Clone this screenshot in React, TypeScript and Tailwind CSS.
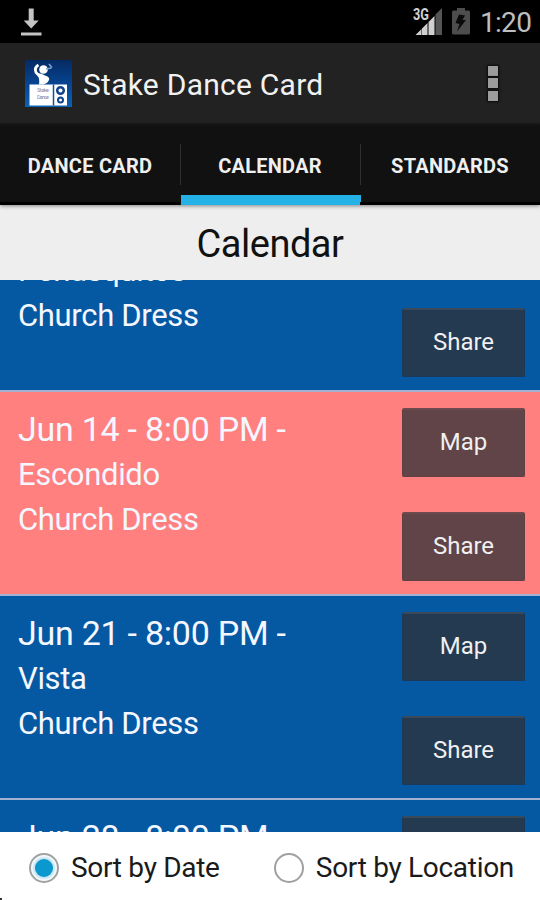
import React from "react";

type Entry = {
  id: string;
  date?: string;
  place?: string;
  dress?: string;
  actions: (string | null)[];
  tone: "blue" | "pink";
};

const entries: Entry[] = [
  { id: "jun-7", place: "Penasquitos", dress: "Church Dress", actions: [null, "Share"], tone: "blue" },
  { id: "jun-14", date: "Jun 14 - 8:00 PM -", place: "Escondido", dress: "Church Dress", actions: ["Map", "Share"], tone: "pink" },
  { id: "jun-21", date: "Jun 21 - 8:00 PM -", place: "Vista", dress: "Church Dress", actions: ["Map", "Share"], tone: "blue" },
  { id: "jun-28", date: "Jun 28 - 8:00 PM -", actions: [""], tone: "blue" },
];

function StatusBar() {
  return (
    <div className="flex h-[43px] shrink-0 items-start bg-black">
      <svg className="ml-[21px] mt-[8px]" width="21" height="28" viewBox="0 0 21 28" fill="#c4c4c4">
        <path d="M7.7 0.5h5v12h5L10.2 20.5 2.7 12.5h5z" />
        <rect x="0" y="24.5" width="20.5" height="3" />
      </svg>
      <svg className="ml-auto mt-[7px]" width="30" height="28" viewBox="0 0 30 28">
        <path d="M22.5 7.5 29 1V28H22.500z" fill="#555" />
        <path d="M2.500 28 8.500 22V28zM9 21.500 14.500 16V28H9zM15.500 15 21.500 9V28H15.500z" fill="#d0d0d0" />
        <text x="0" y="12.500" fontSize="16" fontWeight="700" fill="#d0d0d0" stroke="#000" strokeWidth="2" paintOrder="stroke" textLength="16" lengthAdjust="spacingAndGlyphs">3G</text>
      </svg>
      <svg className="ml-[9px] mt-[8px]" width="18" height="27" viewBox="0 0 18 27">
        <path d="M5 0h8v2.500h3.500Q18 2.500 18 4v21q0 1.500-1.500 1.500h-15Q0 26.500 0 25V4q0-1.500 1.500-1.500H5z" fill="#4d4d4d" />
        <path d="M7 6.500 13 7.500 10.500 12H14L5 23.500 7.500 16 3.500 15z" fill="#0a0a0a" />
      </svg>
      <span className="ml-[10px] mr-[10px] mt-[6px] w-[50px] whitespace-nowrap text-[28px] leading-[34px] tracking-[-0.7px] text-[#bebebe]">1:20</span>
    </div>
  );
}

function AppIcon() {
  return (
    <svg width="47" height="47" viewBox="0 0 47 47">
      <defs>
        <linearGradient id="sky" x1="0" y1="0" x2="0" y2="1">
          <stop offset="0" stopColor="#052a63" />
          <stop offset="0.600" stopColor="#07499a" />
          <stop offset="1" stopColor="#0b62b4" />
        </linearGradient>
      </defs>
      <rect width="47" height="47" fill="url(#sky)" />
      <circle cx="18.500" cy="9.500" r="4.300" fill="#fff" />
      <path d="M13.500 5Q9 7.500 11 12.500L15 16.500" fill="none" stroke="#fff" strokeWidth="2.800" />
      <path d="M12 13Q17 13 20 15.500 26 17 23.500 21 22 24 18.500 24.500H14Q15 19 12 13z" fill="#fff" />
      <path d="M21 9 26.500 8M24 4 27 7.500" stroke="#7fa3cf" strokeWidth="1.500" />
      <rect x="4.500" y="24.500" width="37.500" height="21" fill="#fff" />
      <path d="M28.500 24.500V45.500" stroke="#1a4d95" strokeWidth="1.500" />
      <circle cx="35.500" cy="30.500" r="3.300" fill="#fff" stroke="#10438c" strokeWidth="2.500" />
      <circle cx="35.500" cy="40" r="2.500" fill="#fff" stroke="#10438c" strokeWidth="2" />
      <text x="12" y="32" fontSize="5.500" fill="#88a" textLength="12">Stake</text>
      <text x="12" y="38.500" fontSize="5.500" fill="#88a" textLength="12">Dance</text>
    </svg>
  );
}

function ActionBar() {
  return (
    <div className="flex h-[82px] shrink-0 items-center border-b-2 border-[#191919] bg-[#222]">
      <div className="ml-[25px]"><AppIcon /></div>
      <h1 className="ml-[11px] mt-[3px] whitespace-nowrap text-[30px] leading-9 tracking-[0.25px] text-[#f1f1f1]">Stake Dance Card</h1>
      <div className="ml-auto mr-[42px] flex flex-col gap-[2.5px]">
        {[0, 1, 2].map((i) => (
          <span key={i} className="size-[10px] bg-[#9c9c9c] shadow-[0_0_2px_1px_#0a0a0a]" />
        ))}
      </div>
    </div>
  );
}

function Tabs() {
  return (
    <div className="relative z-10 flex h-[80px] shrink-0 bg-[#111] shadow-[0_1px_4px_rgba(0,0,0,0.45)]">
      {["DANCE CARD", "CALENDAR", "STANDARDS"].map((t, i) => (
        <div key={t} className={"relative flex flex-1 justify-center pt-[27px] " + (i === 1 ? "" : "border-b-[3px] border-black")}>
          <span className="whitespace-nowrap text-[20px] font-bold leading-[28px] tracking-[0.25px] text-[#efefef]">{t}</span>
          {i > 0 && <span className="absolute left-0 top-[19px] h-[41px] w-px bg-[#303030]" />}
          {i === 1 && <span className="absolute -right-px bottom-0 left-[1px] h-[10.5px] bg-[#24b2e6]" />}
        </div>
      ))}
    </div>
  );
}

function ListButton({ label, tone }: { label: string; tone: Entry["tone"] }) {
  return (
    <button
      className={
        "h-[69px] w-[123px] rounded-[2px] border border-t-2 pb-[3px] text-[24px] leading-7 text-[#f0f0f0] " +
        (tone === "blue" ? "border-[#1c3a55] border-t-[#38495a] bg-[#243a50]" : "border-[#5e3f43] border-t-[#6c4a4d] bg-[#614447]")
      }
    >
      {label}
    </button>
  );
}

function Row({ e }: { e: Entry }) {
  return (
    <div
      className={
        "flex h-[204px] shrink-0 justify-between border-b-2 border-[#a3b2d2] pl-[18px] pr-[15px] pt-[16px] text-[#f4f7ff] " +
        (e.tone === "blue" ? "bg-[#0558a2]" : "bg-[#ff807f]")
      }
    >
      <div className="-mt-px whitespace-nowrap text-[31px] leading-[45px] tracking-[-0.33px]">
        <div className="h-[45px] text-[34px] tracking-[-0.25px]">{e.date}</div>
        <div className="h-[45px]">{e.place}</div>
        <div className="h-[45px]">{e.dress}</div>
      </div>
      <div className="flex flex-col gap-[35px]">
        {e.actions.map((a, i) =>
          a === null ? <div key={i} className="h-[69px]" /> : <ListButton key={i} label={a} tone={e.tone} />
        )}
      </div>
    </div>
  );
}

function Radio({ label, on }: { label: string; on?: boolean }) {
  return (
    <label className="flex items-center gap-[12px]">
      <span className="flex size-[30px] items-center justify-center rounded-full border-2 border-[#a0a0a0] bg-white">
        {on && <span className="size-[18px] rounded-full bg-[#0a98cf] shadow-[0_0_3px_2px_#b9e0ee]" />}
      </span>
      <span className="mt-px whitespace-nowrap text-[28px] leading-8 tracking-[-0.3px] text-[#1a1a1a]">{label}</span>
    </label>
  );
}

export default function App() {
  return (
    <div className="relative flex h-[900px] w-[540px] flex-col overflow-hidden bg-white font-[Roboto,sans-serif]">
      <StatusBar />
      <ActionBar />
      <Tabs />
      <div className="flex h-[75px] shrink-0 justify-center bg-[#eee] pt-[17px]">
        <h2 className="text-[38px] leading-[44px] tracking-[-0.5px] text-[#111]">Calendar</h2>
      </div>
      <div className="h-[552px] shrink-0 overflow-hidden">
        <div className="-mt-[92px] flex flex-col">
          {entries.map((e) => (
            <Row key={e.id} e={e} />
          ))}
        </div>
      </div>
      <div className="flex h-[68px] shrink-0 items-start justify-between bg-white pl-[29px] pr-[26px] pt-[19px]">
        <Radio label="Sort by Date" on />
        <Radio label="Sort by Location" />
      </div>
      <span className="absolute bottom-0 left-0 h-[2px] w-[2px] bg-[#333]" />
    </div>
  );
}
